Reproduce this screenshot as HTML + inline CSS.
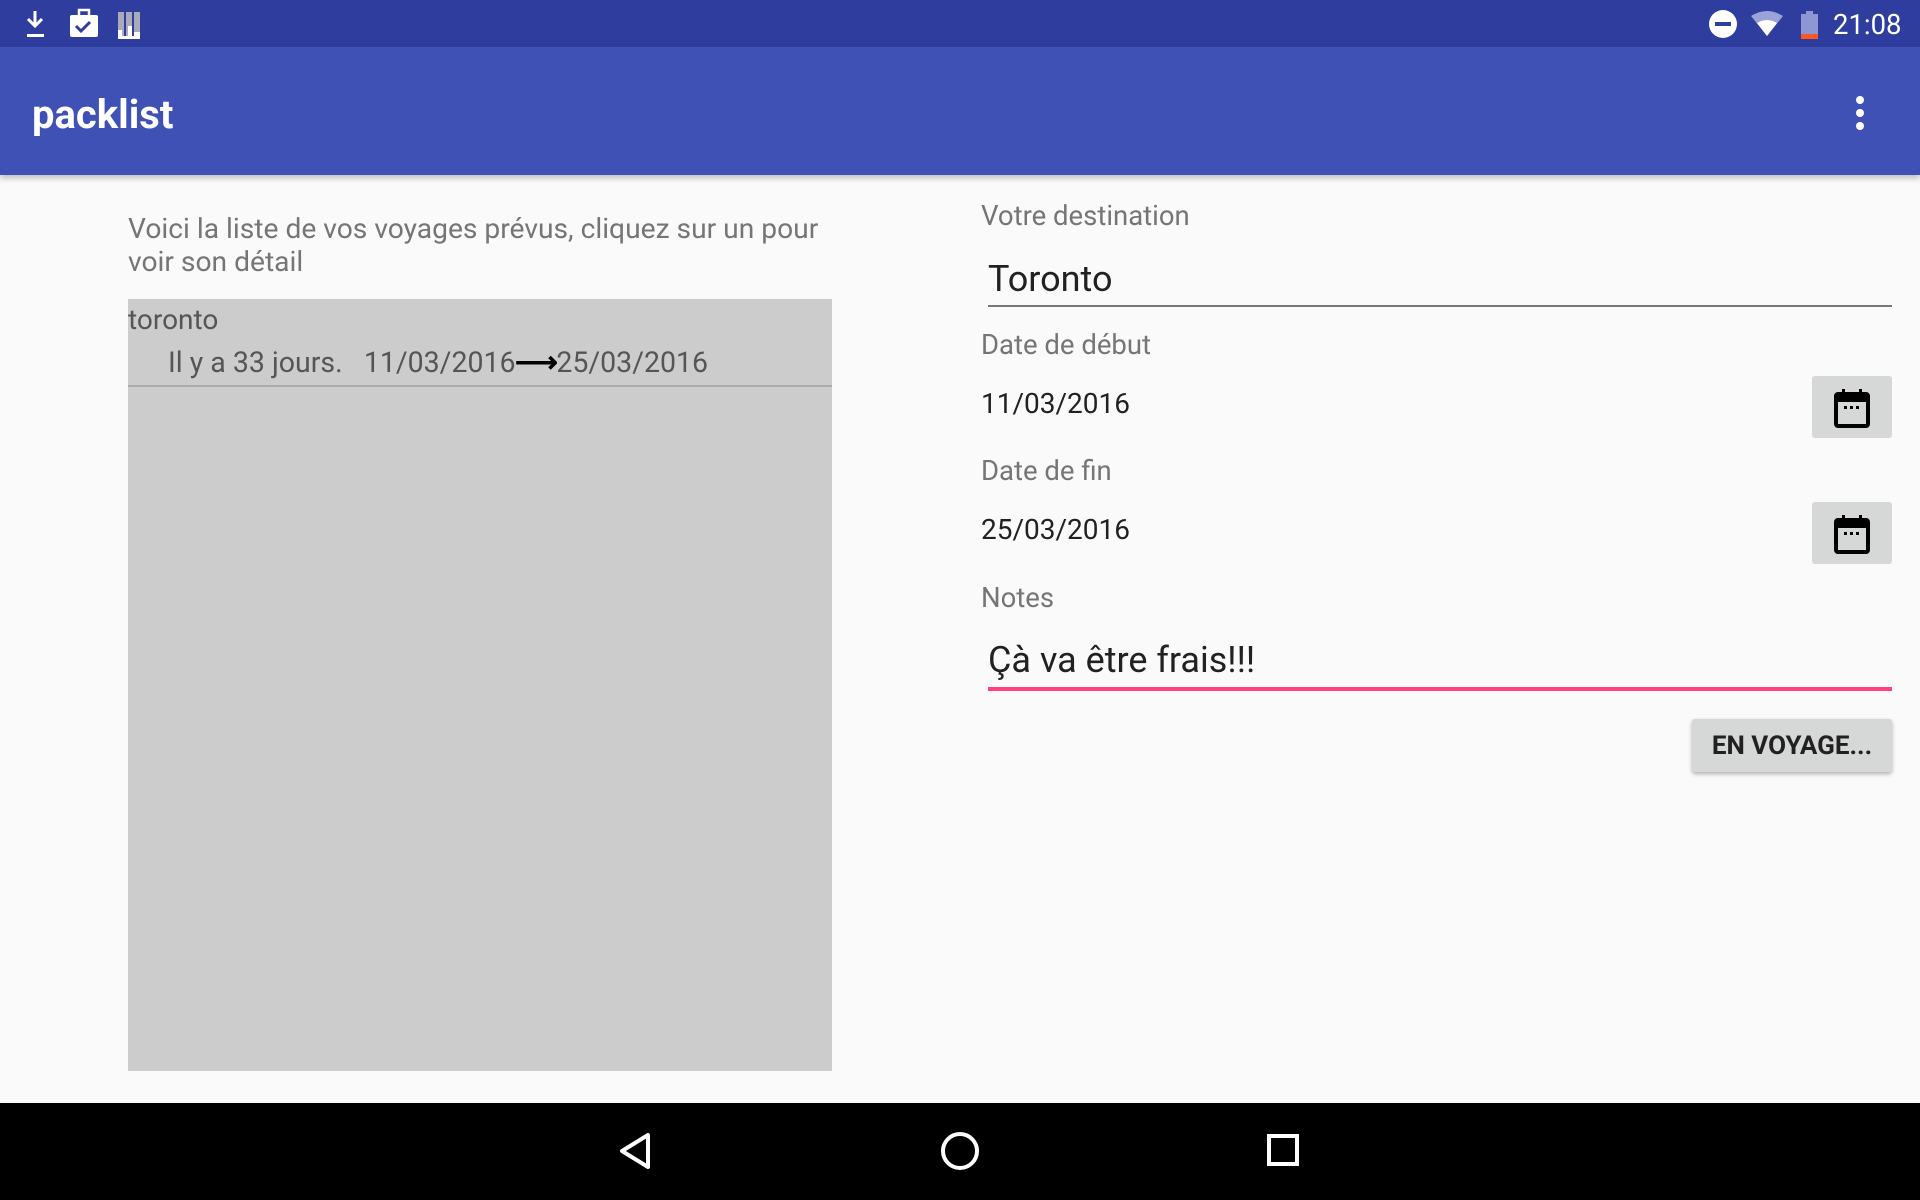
<!DOCTYPE html>
<html><head><meta charset="utf-8"><style>
*{margin:0;padding:0;box-sizing:border-box}
body{width:1920px;height:1200px;overflow:hidden;background:#fafafa;font-family:"Roboto","Liberation Sans",sans-serif;position:relative}
.a{position:absolute;white-space:nowrap}
#sb{left:0;top:0;width:1920px;height:47px;background:#2e3d9e}
#ab{left:0;top:47px;width:1920px;height:128px;background:#3f51b5;box-shadow:0 3px 6px rgba(0,0,0,.25)}
#nav{left:0;top:1103px;width:1920px;height:97px;background:#000}
.lbl{color:#757575;font-size:27.5px}
.val{color:#212121;font-size:28px}
.cal{width:80px;height:62px;background:#d6d7d7;border-radius:3px}
</style></head><body>
<div class="a" id="sb"></div>
<svg class="a" style="left:22px;top:8px" width="130" height="32" viewBox="0 0 130 32">
<path d="M13 3v14M6 11l7 7 7-7" stroke="#fff" stroke-width="3" fill="none"/><rect x="5" y="26" width="17" height="3" fill="#fff"/>
<rect x="48" y="7" width="28" height="22" rx="2" fill="#fff"/><rect x="57" y="2" width="10" height="7" fill="none" stroke="#fff" stroke-width="2.5"/><path d="M54 18l5 5 9-9" stroke="#2e3d9e" stroke-width="3" fill="none"/>
<rect x="96" y="4" width="6" height="26" fill="#aab"/><rect x="104" y="4" width="6" height="26" fill="#aab"/><rect x="112" y="4" width="6" height="26" fill="#aab"/><rect x="96" y="22" width="4" height="8" fill="#fff"/><rect x="106" y="18" width="4" height="12" fill="#fff"/><rect x="112" y="24" width="6" height="6" fill="#fff"/><rect x="96" y="28" width="22" height="3" fill="#fff"/>
</svg>
<svg class="a" style="left:1708px;top:8px" width="120" height="32" viewBox="0 0 120 32">
<circle cx="15" cy="16" r="14" fill="#fff"/><rect x="7" y="14" width="16" height="4" fill="#2e3d9e"/>
<path d="M43 8 Q59 -2 75 8 L59 28 Z" fill="#9aa3d8"/><path d="M49 15 Q59 9 69 15 L59 28 Z" fill="#fff"/>
<rect x="93" y="6" width="17" height="25" fill="#8e97d4"/><rect x="98" y="3" width="7" height="4" fill="#8e97d4"/><rect x="93" y="26" width="17" height="5" fill="#ff5722"/>
</svg>
<div class="a" style="left:1833px;top:8px;color:#fff;font-size:27.5px">21:08</div>
<div class="a" id="ab"></div>
<div class="a" style="left:32px;top:91px;color:#fff;font-size:40px;font-weight:bold">packlist</div>
<svg class="a" style="left:1850px;top:95px" width="20" height="36"><circle cx="10" cy="5" r="4" fill="#fff"/><circle cx="10" cy="18" r="4" fill="#fff"/><circle cx="10" cy="31" r="4" fill="#fff"/></svg>

<div class="a lbl" style="left:128px;top:212px;line-height:33px;white-space:normal;width:720px;font-size:28.2px">Voici la liste de vos voyages prévus, cliquez sur un pour voir son détail</div>
<div class="a" style="left:128px;top:299px;width:704px;height:772px;background:#cccccc"></div>
<div class="a" style="left:128px;top:303px;color:#555;font-size:28px">toronto</div>
<div class="a" style="left:168px;top:346px;color:#555;font-size:28.5px">Il y a 33 jours.&nbsp;&nbsp; 11/03/2016<span style="color:#000;font-weight:bold;display:inline-block;transform:scaleX(1.05)">⟶</span>25/03/2016</div>
<div class="a" style="left:128px;top:385px;width:704px;height:2px;background:#aaa"></div>

<div class="a lbl" style="left:981px;top:199px">Votre destination</div>
<div class="a" style="left:988px;top:258px;color:#212121;font-size:36px">Toronto</div>
<div class="a" style="left:988px;top:305px;width:904px;height:2px;background:#777"></div>
<div class="a lbl" style="left:981px;top:328px">Date de début</div>
<div class="a val" style="left:981px;top:387px">11/03/2016</div>
<div class="a cal" style="left:1812px;top:376px"></div>
<div class="a lbl" style="left:981px;top:454px">Date de fin</div>
<div class="a val" style="left:981px;top:513px">25/03/2016</div>
<div class="a cal" style="left:1812px;top:502px"></div>
<svg class="a" style="left:1832px;top:386px" width="40" height="44" viewBox="0 0 40 44"><rect x="4" y="8" width="32" height="32" rx="2" fill="none" stroke="#000" stroke-width="4"/><rect x="4" y="8" width="32" height="8" fill="#000"/><rect x="10" y="3" width="3" height="8" fill="#000"/><rect x="27" y="3" width="3" height="8" fill="#000"/><rect x="12" y="20" width="3" height="3"/><rect x="18" y="20" width="3" height="3"/><rect x="24" y="20" width="3" height="3"/></svg>
<svg class="a" style="left:1832px;top:512px" width="40" height="44" viewBox="0 0 40 44"><rect x="4" y="8" width="32" height="32" rx="2" fill="none" stroke="#000" stroke-width="4"/><rect x="4" y="8" width="32" height="8" fill="#000"/><rect x="10" y="3" width="3" height="8" fill="#000"/><rect x="27" y="3" width="3" height="8" fill="#000"/><rect x="12" y="20" width="3" height="3"/><rect x="18" y="20" width="3" height="3"/><rect x="24" y="20" width="3" height="3"/></svg>
<div class="a lbl" style="left:981px;top:581px">Notes</div>
<div class="a" style="left:988px;top:639px;color:#212121;font-size:36px">Çà va être frais!!!</div>
<div class="a" style="left:988px;top:687px;width:904px;height:4px;background:#ff4081"></div>
<div class="a" style="left:1692px;top:719px;width:200px;height:53px;background:#d6d7d7;border-radius:3px;box-shadow:0 2px 4px rgba(0,0,0,.3);color:#212121;font-size:26px;font-weight:bold;text-align:center;line-height:55px">EN VOYAGE...</div>

<div class="a" id="nav"></div>
<svg class="a" style="left:600px;top:1115px" width="720" height="72" viewBox="0 0 720 72">
<path d="M22 36 L48 20 L48 52 Z" fill="none" stroke="#fff" stroke-width="4" stroke-linejoin="round"/>
<circle cx="360" cy="36" r="17" fill="none" stroke="#fff" stroke-width="4"/>
<rect x="669" y="21" width="28" height="28" fill="none" stroke="#fff" stroke-width="4"/>
</svg>
</body></html>
